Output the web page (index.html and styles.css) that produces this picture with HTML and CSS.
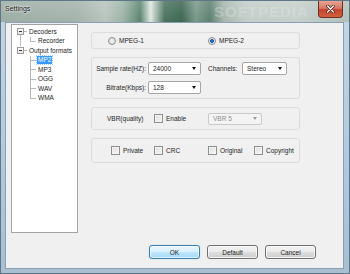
FILE: index.html
```html
<!DOCTYPE html>
<html lang="en">
<head>
    <meta charset="UTF-8">
    <title>Settings</title>
    <link rel="stylesheet" href="styles.css">
</head>
<body>
    <div class="window">
        <div class="titlebar">
            <span class="title">Settings</span>
            <span class="watermark">SOFTPEDIA</span>
            <button class="close">
                <svg width="9" height="8" viewBox="0 0 9 8">
                    <path d="M1.5 1l6 6M7.5 1l-6 6" stroke="#3a1a14" stroke-width="2.6" stroke-linecap="round"/>
                    <path d="M1.5 1l6 6M7.5 1l-6 6" stroke="#fff" stroke-width="1.4" stroke-linecap="round"/>
                </svg>
            </button>
        </div>

        <div class="client">
            <div class="main">
                <ul class="tree">
                    <li class="node">
                        <div class="row"><span class="exp"></span><span class="stub"></span><span class="label">Decoders</span></div>
                        <ul class="kids">
                            <li class="row last"><span class="conn"></span><span class="label">Recorder</span></li>
                        </ul>
                    </li>
                    <li class="node">
                        <div class="row"><span class="exp"></span><span class="stub"></span><span class="label">Output formats</span></div>
                        <ul class="kids">
                            <li class="row"><span class="conn"></span><span class="label selected">MP2</span></li>
                            <li class="row"><span class="conn"></span><span class="label">MP3</span></li>
                            <li class="row"><span class="conn"></span><span class="label">OGG</span></li>
                            <li class="row"><span class="conn"></span><span class="label">WAV</span></li>
                            <li class="row last"><span class="conn"></span><span class="label">WMA</span></li>
                        </ul>
                    </li>
                </ul>

                <div class="panel">
                    <div class="group group-mpeg">
                        <label class="opt"><span class="radio"></span>MPEG-1</label>
                        <label class="opt"><span class="radio checked"></span>MPEG-2</label>
                    </div>

                    <div class="group group-rate">
                        <span class="field-label">Sample rate(HZ):</span>
                        <span class="combo">24000</span>
                        <span class="field-label left">Channels:</span>
                        <span class="combo">Stereo</span>
                        <span class="field-label">Bitrate(Kbps):</span>
                        <span class="combo">128</span>
                    </div>

                    <div class="group group-vbr">
                        <span class="vbr-label">VBR(quality)</span>
                        <label class="opt vbr-enable"><span class="check"></span>Enable</label>
                        <span class="combo disabled">VBR 5</span>
                    </div>

                    <div class="group group-flags">
                        <label class="opt w-private"><span class="check"></span>Private</label>
                        <label class="opt w-crc"><span class="check"></span>CRC</label>
                        <label class="opt w-original"><span class="check"></span>Original</label>
                        <label class="opt"><span class="check"></span>Copyright</label>
                    </div>
                </div>
            </div>

            <div class="buttons">
                <button class="btn default-btn">OK</button>
                <button class="btn">Default</button>
                <button class="btn">Cancel</button>
            </div>
        </div>
    </div>
</body>
</html>
```

FILE: styles.css
```css
body {
    margin: 0;
    font-family: "Liberation Sans", Arial, sans-serif;
    font-size: 6.5px;
    color: #1e1e1e;
}

.window {
    position: relative;
    width: 350px;
    height: 274px;
    box-sizing: border-box;
    border: 1px solid #5f7588;
    background: linear-gradient(180deg, #c3d6e6 0%, #b2c9dd 60%, #a8bfd2 100%);
    display: flex;
    flex-direction: column;
    overflow: hidden;
}

.titlebar {
    height: 21px;
    flex: none;
    display: flex;
    align-items: flex-start;
    padding-left: 4px;
    background:
        linear-gradient(180deg, rgba(255, 255, 255, 0.15), rgba(255, 255, 255, 0)),
        linear-gradient(90deg, #9cada5 0%, #a3b3ab 22%, #b7c4bd 30%, #9db5a8 35%, #5c8470 40%,
            #dfe8e2 43%, #4a735e 47%, #3d6650 52%, #78998a 56%, #5d7f6f 60%, #a6b6ae 64%,
            #c2ccc8 70%, #c6cfcb 85%, #b3c0bb 100%);
}

.title {
    margin-top: 4px;
    font-size: 7px;
    color: #111;
    text-shadow: 0 0 3px #fff, 0 0 2px #fff;
}

.watermark {
    position: absolute;
    left: 213px;
    top: 2px;
    font-size: 15px;
    font-weight: bold;
    letter-spacing: 1px;
    color: rgba(225, 232, 229, 0.35);
}

.close {
    margin-left: auto;
    margin-right: 6px;
    width: 25px;
    height: 17px;
    padding: 0;
    border: 1px solid #6e2e24;
    border-top: none;
    border-radius: 0 0 4px 4px;
    background: linear-gradient(180deg, #e6a595 0%, #d77a66 45%, #c5432b 55%, #d0623f 100%);
    display: flex;
    align-items: center;
    justify-content: center;
}

.client {
    flex: 1;
    margin: 0 5px 4px 4px;
    box-sizing: border-box;
    border: 1px solid #8a9fb2;
    background: #f0f0f0;
    padding: 1px 0 0 5px;
    display: flex;
    flex-direction: column;
}

.main {
    display: flex;
    gap: 13px;
}

/* tree */

.tree {
    width: 67px;
    height: 209px;
    box-sizing: border-box;
    margin: 0;
    padding: 2px 0 0 5px;
    list-style: none;
    background: #fff;
    border: 1px solid #a3a3a3;
}

.tree ul {
    list-style: none;
    margin: 0;
    padding: 0;
}

.node:first-child {
    background: linear-gradient(#b9b9b9, #b9b9b9) 3px 6px / 1px 15px no-repeat;
}

.row {
    height: 9.5px;
    display: flex;
    align-items: center;
}

.exp {
    width: 7px;
    height: 7px;
    box-sizing: border-box;
    border: 1px solid #9a9a9a;
    background: linear-gradient(#333, #333) center / 3px 1px no-repeat, linear-gradient(180deg, #fff, #e6e6e6);
}

.stub {
    width: 3px;
    height: 1px;
    background: #b9b9b9;
}

.label {
    margin-left: 1px;
    padding: 0 1px;
    line-height: 8px;
}

.kids {
    margin-left: 13px !important;
}

.conn {
    width: 6px;
    height: 100%;
    background:
        linear-gradient(#b9b9b9, #b9b9b9) left top / 1px 100% no-repeat,
        linear-gradient(#b9b9b9, #b9b9b9) left center / 100% 1px no-repeat;
}

.last .conn {
    background:
        linear-gradient(#b9b9b9, #b9b9b9) left top / 1px 50% no-repeat,
        linear-gradient(#b9b9b9, #b9b9b9) left center / 100% 1px no-repeat;
}

.selected {
    background: #3399ff;
    color: #fff;
    outline: 1px dotted #9ccaff;
}

/* right panel */

.panel {
    width: 209px;
    padding-top: 8px;
    display: flex;
    flex-direction: column;
    gap: 8px;
}

.group {
    box-sizing: border-box;
    border: 1px solid #dcdcdc;
    border-radius: 3px;
    display: flex;
    align-items: center;
}

.opt {
    display: flex;
    align-items: center;
    gap: 3px;
}

.radio {
    width: 6px;
    height: 6px;
    border-radius: 50%;
    border: 1px solid #8e8f8f;
    background: radial-gradient(circle, #f4f4f4, #d6d6d6);
}

.radio.checked {
    background: radial-gradient(circle, #2a7fd2 0, #1a5fa8 1.6px, #e8e8e8 2.2px);
}

.check {
    width: 7px;
    height: 7px;
    border: 1px solid #8e8f8f;
    background: linear-gradient(135deg, #dcdcdc, #f9f9f9);
    box-shadow: inset 0 0 0 1px #f4f4f4;
}

.group-mpeg {
    height: 17px;
    padding-left: 16px;
}

.group-mpeg .opt:first-child {
    width: 100px;
}

.group-rate {
    height: 42px;
    display: grid;
    grid-template-columns: 51px 53px 37px 45px;
    grid-template-rows: 13px 13px;
    column-gap: 2px;
    row-gap: 6px;
    align-content: center;
    padding-left: 3px;
}

.field-label {
    text-align: right;
    align-self: center;
}

.field-label.left {
    text-align: left;
    margin-left: 5px;
}

.combo {
    box-sizing: border-box;
    height: 13px;
    border: 1px solid #a5a5a5;
    border-radius: 2px;
    background: #fff;
    padding-left: 4px;
    display: flex;
    align-items: center;
}

.combo::after {
    content: "";
    margin-left: auto;
    margin-right: 4px;
    border-left: 2.5px solid transparent;
    border-right: 2.5px solid transparent;
    border-top: 3px solid #111;
}

.combo.disabled {
    width: 54px;
    height: 12px;
    color: #8d8d8d;
    background: #f4f4f4;
    border-color: #c9c9c9;
}

.combo.disabled::after {
    border-top-color: #9a9a9a;
}

.group-vbr {
    height: 23px;
    padding-left: 15px;
}

.vbr-label {
    width: 47px;
}

.vbr-enable {
    width: 54px;
}

.group-flags {
    height: 25px;
    padding-left: 19px;
}

.w-private {
    width: 43px;
}

.w-crc {
    width: 54px;
}

.w-original {
    width: 46px;
}

/* bottom buttons */

.buttons {
    margin-top: 12px;
    padding-right: 27px;
    display: flex;
    justify-content: flex-end;
    gap: 7px;
}

.btn {
    width: 51px;
    height: 14px;
    padding: 0;
    font-family: inherit;
    font-size: 6.5px;
    color: #1e1e1e;
    border: 1px solid #707070;
    border-radius: 3px;
    background: linear-gradient(180deg, #f2f2f2 0%, #ebebeb 50%, #dddddd 51%, #cfcfcf 100%);
    box-shadow: inset 0 0 0 1px rgba(255, 255, 255, 0.7);
}

.default-btn {
    border-color: #3c7fb1;
    background: linear-gradient(180deg, #eaf6fd 0%, #d9f0fc 50%, #bee6fd 51%, #a7d9f5 100%);
    box-shadow: inset 0 0 0 1px rgba(255, 255, 255, 0.6), 0 0 1px #56b4e4;
}
```
